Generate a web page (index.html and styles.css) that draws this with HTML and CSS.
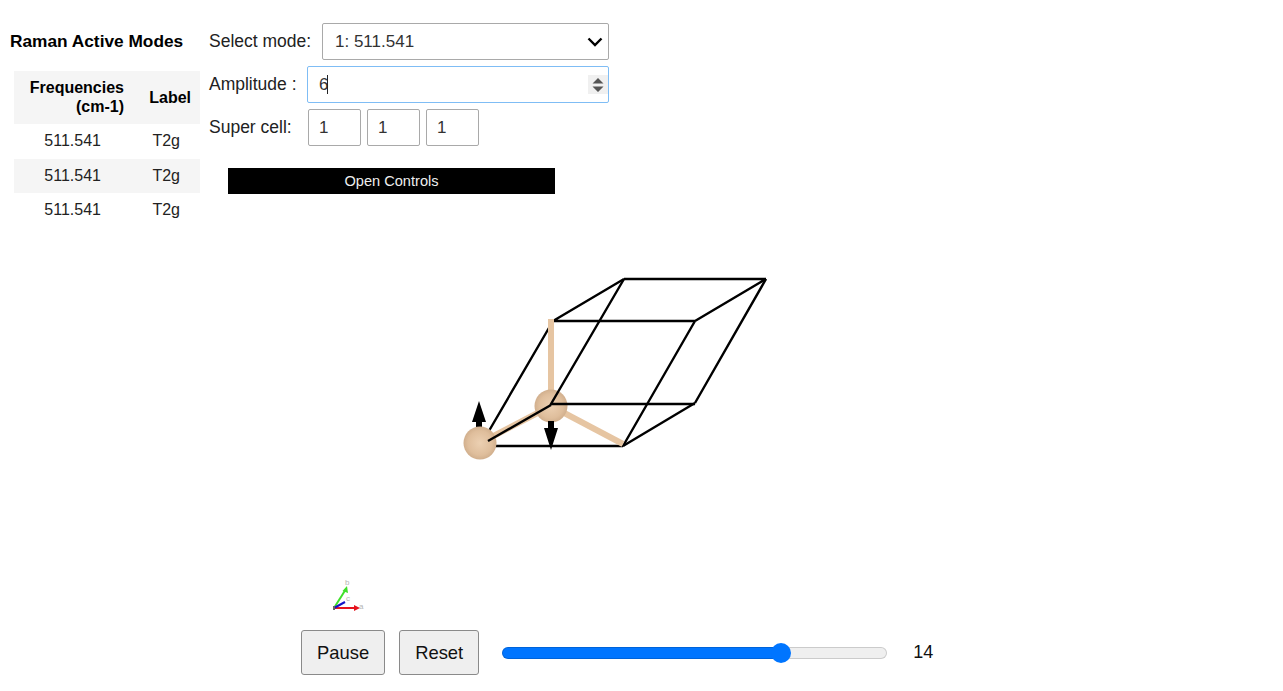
FILE: index.html
```html
<!DOCTYPE html>
<html lang="en">
<head>
  <meta charset="UTF-8">
  <meta name="viewport" content="width=device-width, initial-scale=1.0">
  <title>Raman modes</title>
  <link rel="stylesheet" href="styles.css">
</head>
<body>

  <div class="top-row">
    <div class="modes-panel">
      <h2>Raman Active Modes</h2>
      <table class="modes-table">
        <thead>
          <tr><th>Frequencies<br>(cm-1)</th><th>Label</th></tr>
        </thead>
        <tbody>
          <tr><td>511.541</td><td>T2g</td></tr>
          <tr><td>511.541</td><td>T2g</td></tr>
          <tr><td>511.541</td><td>T2g</td></tr>
        </tbody>
      </table>
    </div>

    <div class="controls-panel">
      <div class="control-row select-row">
        <label for="mode">Select mode:</label>
        <div class="select-wrap">
          <select id="mode" class="mode-select">
            <option>1: 511.541</option>
            <option>2: 511.541</option>
            <option>3: 511.541</option>
          </select>
          <svg class="chevron" width="16" height="10" viewBox="0 0 16 10">
            <path d="M1.5 1.5 L8 8 L14.5 1.5" fill="none" stroke="#000" stroke-width="2.4"/>
          </svg>
        </div>
      </div>

      <div class="control-row amp-row">
        <label for="amplitude">Amplitude :</label>
        <div class="amp-wrap">
          <input id="amplitude" class="amp-input" type="text" value="6">
          <span class="caret"></span>
          <span class="spinner">
            <svg width="12" height="16" viewBox="0 0 12 16">
              <path d="M6 1 L11.5 6.5 L0.5 6.5 Z M6 15 L11.5 9.5 L0.5 9.5 Z" fill="#555"/>
            </svg>
          </span>
        </div>
      </div>

      <div class="control-row cell-row">
        <label>Super cell:</label>
        <input class="cell-input" type="text" value="1">
        <input class="cell-input" type="text" value="1">
        <input class="cell-input" type="text" value="1">
      </div>

      <div class="open-controls">Open Controls</div>
    </div>
  </div>

  <svg class="viewer" width="1283" height="395" viewBox="0 230 1283 395">
    <defs>
      <radialGradient id="atom" cx="0.5" cy="0.5" r="0.52">
        <stop offset="0" stop-color="#ecd0b2"/>
        <stop offset="0.7" stop-color="#dfbe9c"/>
        <stop offset="1" stop-color="#cfad8b"/>
      </radialGradient>
    </defs>

    <!-- cell edges behind the atoms -->
    <g class="cell">
      <path d="M553 321 H695 M624 279 H766 M553 321 L624 279 M695 321 L766 279"/>
      <path d="M695 321 L623 446 M766 279 L695 403"/>
      <path d="M553 321 L486 436 M695 403 L623 446 M480 446 H623"/>
    </g>

    <!-- bonds -->
    <g class="bonds">
      <path d="M551 406 V319"/>
      <path d="M551 406 L623 444"/>
      <path d="M551 406 L480 443"/>
    </g>

    <circle cx="551" cy="406" r="16.5" fill="url(#atom)"/>

    <!-- displacement arrows -->
    <path class="arrow" d="M479 401 L486 422 L482 422 L482 430 L476 430 L476 422 L472 422 Z"/>
    <path class="arrow" d="M551 450 L558 428 L554 428 L554 421 L548 421 L548 428 L544 428 Z"/>

    <circle cx="480" cy="443" r="16.5" fill="url(#atom)"/>

    <!-- these edges end on the atom centre, drawn on top of it -->
    <path class="cell" d="M488 441 L551 405 M624 279 L551 404 H695"/>

    <!-- axes helper -->
    <g class="axes">
      <path d="M334 608 L357 608" stroke="#e6141e"/>
      <path d="M334 608 L346 589" stroke="#3fe02a"/>
      <path d="M334 608 L345 602" stroke="#1414c8"/>
      <path d="M334 606 L334 610" stroke="#666"/>
    </g>
    <path d="M360 608 L354 605 L354 611 Z" fill="#e6141e"/>
    <path d="M347 586 L342.5 591 L348 593 Z" fill="#3fe02a"/>
    <text class="axis-label" x="359" y="609">a</text>
    <text class="axis-label" x="345" y="585">b</text>
    <text class="axis-label" x="346" y="601">c</text>
  </svg>

  <div class="bottom-row">
    <button type="button" class="play-btn">Pause</button>
    <button type="button" class="play-btn">Reset</button>
    <input class="frame-slider" type="range" min="0" max="19" value="14">
    <span class="frame-value">14</span>
  </div>

</body>
</html>
```

FILE: styles.css
```css
body {
  margin: 0;
  font-family: "Liberation Sans", Arial, sans-serif;
  color: #222;
  background: #fff;
  overflow: hidden;
}

.top-row {
  display: flex;
  height: 230px;
}

.modes-panel {
  width: 209px;
  padding-left: 10px;
  box-sizing: border-box;
}

.modes-panel h2 {
  margin: 31px 0 20px;
  font-size: 17.3px;
  line-height: 20px;
  color: #000;
}

.modes-table {
  margin-left: 4px;
  width: 186px;
  border-collapse: collapse;
  font-size: 16px;
}

.modes-table th {
  height: 52px;
  padding: 0 0 1px;
  text-align: right;
  line-height: 19px;
  color: #000;
}

.modes-table th:first-child {
  width: 127px;
  padding-right: 17px;
  box-sizing: border-box;
}

.modes-table th:last-child {
  padding-right: 9px;
}

.modes-table td {
  height: 34.5px;
  padding: 0;
  text-align: right;
}

.modes-table td:first-child {
  padding-right: 40px;
}

.modes-table td:last-child {
  padding-right: 20px;
}

.modes-table thead tr,
.modes-table tbody tr:nth-child(2) {
  background-color: #f5f5f5;
}

.controls-panel {
  padding-top: 23px;
  font-size: 17.5px;
}

.control-row {
  display: flex;
  align-items: center;
}

.control-row label {
  color: #222;
}

.select-row {
  height: 37px;
  margin-bottom: 6px;
}

.select-row label {
  width: 113px;
}

.select-wrap {
  position: relative;
}

.mode-select {
  appearance: none;
  display: block;
  width: 287px;
  height: 37px;
  padding: 0 0 0 12px;
  border: 1.5px solid #a9a9a9;
  border-radius: 2px;
  background: #fff;
  font: 17px "Liberation Sans", Arial, sans-serif;
  color: #333;
}

.chevron {
  position: absolute;
  right: 6px;
  top: 14px;
}

.amp-row {
  height: 37px;
  margin-bottom: 6px;
}

.amp-row label {
  width: 98px;
}

.amp-wrap {
  position: relative;
}

.amp-input {
  display: block;
  width: 302px;
  height: 37px;
  padding: 0 0 0 11px;
  box-sizing: border-box;
  border: 1.5px solid #7fbdf5;
  border-radius: 2px;
  outline: none;
  font: 17px "Liberation Sans", Arial, sans-serif;
  color: #333;
}

.caret {
  position: absolute;
  left: 20px;
  top: 9px;
  width: 1px;
  height: 19px;
  background: #222;
}

.spinner {
  position: absolute;
  right: 1px;
  top: 9px;
  width: 20px;
  height: 19px;
  background: #f0f0f0;
  display: flex;
  align-items: center;
  justify-content: center;
}

.cell-row {
  height: 37px;
  gap: 6px;
}

.cell-row label {
  width: 93px;
}

.cell-input {
  width: 53px;
  height: 37px;
  padding: 0 0 0 10px;
  box-sizing: border-box;
  border: 1.5px solid #a9a9a9;
  border-radius: 2px;
  font: 17px "Liberation Sans", Arial, sans-serif;
  color: #333;
}

.open-controls {
  width: 327px;
  height: 26px;
  margin: 22px 0 0 19px;
  background: #000;
  color: #eee;
  font-size: 14.6px;
  line-height: 27px;
  text-align: center;
}

.viewer {
  display: block;
}

.cell {
  fill: none;
  stroke: #000;
  stroke-width: 2.4;
}

.bonds {
  fill: none;
  stroke: #e6c5a2;
  stroke-width: 6;
}

.arrow {
  fill: #000;
}

.axes {
  fill: none;
  stroke-width: 2;
}

.axis-label {
  font-size: 8px;
  fill: #b5b5b5;
}

.bottom-row {
  display: flex;
  align-items: center;
  height: 45px;
  margin-top: 5px;
  padding-left: 301px;
}

.play-btn {
  height: 45px;
  margin-right: 14px;
  padding: 0 15px;
  background-color: #efefef;
  border: 1.5px solid #8a8a8a;
  border-radius: 3px;
  font: 18.4px "Liberation Sans", Arial, sans-serif;
  color: #111;
}

.frame-slider {
  appearance: none;
  width: 385px;
  height: 22px;
  margin: 0 0 0 9px;
  background: transparent;
}

.frame-slider::-webkit-slider-runnable-track {
  height: 12px;
  border-radius: 6px;
  box-sizing: border-box;
  background: linear-gradient(to right, #0075ff 72%, #efefef 72%);
  box-shadow: inset 0 0 0 1px rgba(0, 0, 0, 0.15);
}

.frame-slider::-webkit-slider-thumb {
  appearance: none;
  width: 20px;
  height: 20px;
  margin-top: -4px;
  border-radius: 50%;
  background: #0075ff;
}

.frame-value {
  margin-left: 26px;
  font-size: 18px;
  color: #111;
}
```
